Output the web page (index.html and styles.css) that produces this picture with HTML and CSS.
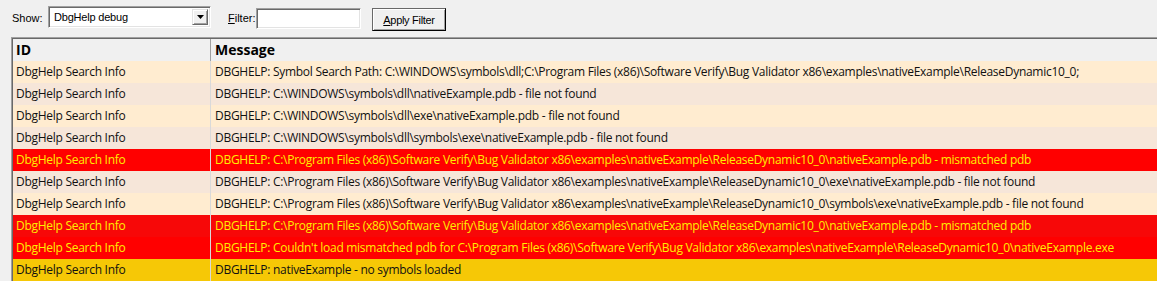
FILE: index.html
```html
<!DOCTYPE html>
<html>

<head>
  <meta charset="utf-8">
  <link rel="stylesheet" href="styles.css">
</head>

<body>
  <div class="toolbar">
    <span class="lbl show-lbl">Show:</span>
    <div class="combo">
      <span class="combo-text">DbgHelp debug</span>
      <span class="combo-btn">
        <svg width="7" height="4" viewBox="0 0 7 4"><path d="M0 0H7L3.5 4Z" fill="#000"/></svg>
      </span>
    </div>
    <span class="lbl filter-lbl"><u>F</u>ilter:</span>
    <input class="filter-input" type="text">
    <button class="apply"><u>A</u>pply Filter</button>
  </div>

  <div class="list">
    <div class="row head">
      <div class="c-id">ID</div>
      <div class="c-msg">Message</div>
    </div>
    <div class="row info">
      <div class="c-id">DbgHelp Search Info</div>
      <div class="c-msg">DBGHELP: Symbol Search Path: C:\WINDOWS\symbols\dll;C:\Program Files (x86)\Software Verify\Bug Validator x86\examples\nativeExample\ReleaseDynamic10_0;</div>
    </div>
    <div class="row info alt">
      <div class="c-id">DbgHelp Search Info</div>
      <div class="c-msg">DBGHELP: C:\WINDOWS\symbols\dll\nativeExample.pdb - file not found</div>
    </div>
    <div class="row info">
      <div class="c-id">DbgHelp Search Info</div>
      <div class="c-msg">DBGHELP: C:\WINDOWS\symbols\dll\exe\nativeExample.pdb - file not found</div>
    </div>
    <div class="row info alt">
      <div class="c-id">DbgHelp Search Info</div>
      <div class="c-msg">DBGHELP: C:\WINDOWS\symbols\dll\symbols\exe\nativeExample.pdb - file not found</div>
    </div>
    <div class="row error">
      <div class="c-id">DbgHelp Search Info</div>
      <div class="c-msg">DBGHELP: C:\Program Files (x86)\Software Verify\Bug Validator x86\examples\nativeExample\ReleaseDynamic10_0\nativeExample.pdb - mismatched pdb</div>
    </div>
    <div class="row info alt">
      <div class="c-id">DbgHelp Search Info</div>
      <div class="c-msg">DBGHELP: C:\Program Files (x86)\Software Verify\Bug Validator x86\examples\nativeExample\ReleaseDynamic10_0\exe\nativeExample.pdb - file not found</div>
    </div>
    <div class="row info">
      <div class="c-id">DbgHelp Search Info</div>
      <div class="c-msg">DBGHELP: C:\Program Files (x86)\Software Verify\Bug Validator x86\examples\nativeExample\ReleaseDynamic10_0\symbols\exe\nativeExample.pdb - file not found</div>
    </div>
    <div class="row error alt">
      <div class="c-id">DbgHelp Search Info</div>
      <div class="c-msg">DBGHELP: C:\Program Files (x86)\Software Verify\Bug Validator x86\examples\nativeExample\ReleaseDynamic10_0\nativeExample.pdb - mismatched pdb</div>
    </div>
    <div class="row error">
      <div class="c-id">DbgHelp Search Info</div>
      <div class="c-msg">DBGHELP: Couldn't load mismatched pdb for C:\Program Files (x86)\Software Verify\Bug Validator x86\examples\nativeExample\ReleaseDynamic10_0\nativeExample.exe</div>
    </div>
    <div class="row warn alt">
      <div class="c-id">DbgHelp Search Info</div>
      <div class="c-msg">DBGHELP: nativeExample - no symbols loaded</div>
    </div>
  </div>
</body>

</html>
```

FILE: styles.css
```css
/* page */
body {
  margin: 0;
  background: #f0f0f0;
  font-family: "Liberation Sans", Arial, sans-serif;
  font-size: 11px;
  color: #000;
  overflow: hidden;
}

/* toolbar */
.toolbar {
  display: flex;
  align-items: flex-start;
  height: 37px;
  padding-left: 12px;
  box-sizing: border-box;
}

.lbl {
  margin-top: 12px;
  line-height: 13px;
}

.show-lbl {
  width: 36px;
}

.filter-lbl {
  width: 28px;
  margin-left: 17px;
}

/* sunken combo */
.combo {
  margin-top: 6px;
  width: 163px;
  height: 22px;
  box-sizing: border-box;
  display: flex;
  align-items: center;
  background: #fff;
  border: 1px solid;
  border-color: #a0a0a0 #fff #fff #a0a0a0;
  box-shadow: inset 1px 1px 0 #696969, inset -1px -1px 0 #e3e3e3;
  padding: 2px;
}

.combo-text {
  flex: 1;
  padding-left: 3px;
  line-height: 16px;
  letter-spacing: -0.2px;
}

.combo-btn {
  width: 16px;
  height: 16px;
  box-sizing: border-box;
  display: flex;
  align-items: center;
  justify-content: center;
  background: #f0f0f0;
  border: 1px solid;
  border-color: #e3e3e3 #696969 #696969 #e3e3e3;
  box-shadow: inset 1px 1px 0 #fff, inset -1px -1px 0 #a0a0a0;
}

.filter-input {
  margin: 8px 0 0 0;
  width: 105px;
  height: 21px;
  box-sizing: border-box;
  background: #fff;
  border: 1px solid;
  border-color: #a0a0a0 #fff #fff #a0a0a0;
  box-shadow: inset 1px 1px 0 #696969, inset -1px -1px 0 #e3e3e3;
  outline: none;
}

.apply {
  margin: 8px 0 0 11px;
  width: 74px;
  height: 23px;
  padding: 0;
  font-family: "Liberation Sans", Arial, sans-serif;
  font-size: 11px;
  letter-spacing: -0.3px;
  color: #000;
  background: #f0f0f0;
  border: 1px solid #696969;
  border-right-color: #000;
  border-bottom-color: #000;
  box-shadow: inset 1px 1px 0 #fff, inset -1px -1px 0 #a0a0a0;
}

/* list view */
.list {
  margin-left: 11px;
  border-top: 1px solid #a0a0a0;
  border-left: 1px solid #a0a0a0;
  box-shadow: inset 1px 1px 0 #696969;
  padding: 1px 0 0 1px;
  font-family: "Open Sans", "Noto Sans", sans-serif;
  font-size: 12px;
  letter-spacing: -0.28px;
}

.row {
  display: flex;
  height: 22px;
  line-height: 22px;
  white-space: nowrap;
}

.c-id {
  width: 198px;
  padding-left: 3px;
  box-sizing: border-box;
  border-right: 1px solid #d9d9d9;
  overflow: hidden;
}

.c-msg {
  flex: 1;
  padding-left: 4px;
  overflow: hidden;
}

.head {
  background: #f0f0f0;
  font-weight: bold;
  font-size: 14px;
  letter-spacing: 0;
}

.head .c-id {
  border-right: 1px solid #a0a0a0;
}

.info {
  background: #ffecd0;
  color: #111;
}

.info.alt {
  background: #f6e6d9;
}

.error {
  background: #ff0000;
  color: #ffee00;
}

.error.alt {
  background: #f70808;
}

.warn {
  background: #f6c806;
  color: #111;
}
```
